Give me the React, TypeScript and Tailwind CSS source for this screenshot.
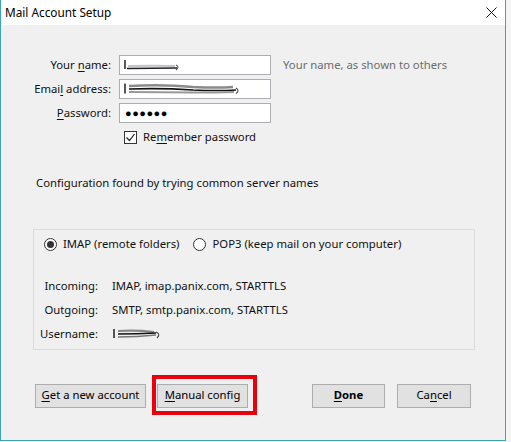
import React from "react";

const font = { fontFamily: '"Noto Sans", "Open Sans", sans-serif' };

function U({ children }: { children: React.ReactNode }) {
  return <span className="underline underline-offset-2">{children}</span>;
}

function Scribble({ w, kind }: { w: number; kind: number }) {
  if (kind === 0) {
    return (
      <svg width={w} height={14} viewBox={`0 0 ${w} 14`}>
        <path d="M2 2 V11" stroke="#111" strokeWidth="1.4" fill="none" />
        <path d="M4 10.5 Q28 10 54 10" stroke="#222" strokeWidth="1.6" fill="none" />
        <path d="M5 8 Q28 7.5 52 8" stroke="#c4c4c4" strokeWidth="2" fill="none" />
        <path d="M53 7 Q57 9 53 12" stroke="#555" strokeWidth="1.1" fill="none" />
      </svg>
    );
  }
  if (kind === 1) {
    return (
      <svg width={w} height={14} viewBox={`0 0 ${w} 14`}>
        <path d="M2 1.5 V11.5" stroke="#111" strokeWidth="1.4" fill="none" />
        <path d="M6 4 Q40 2 70 5 Q95 6 110 5" stroke="#8a8a8a" strokeWidth="2.6" fill="none" />
        <path d="M6 7 Q40 6 70 8 Q95 9 113 8" stroke="#111" strokeWidth="1.6" fill="none" />
        <path d="M6 10 Q40 10 70 10.5 Q95 10.5 111 10" stroke="#999" strokeWidth="2.2" fill="none" />
        <path d="M113 6 Q117 8.5 113 11.5" stroke="#444" strokeWidth="1.1" fill="none" />
      </svg>
    );
  }
  return (
    <svg width={w} height={12} viewBox={`0 0 ${w} 12`}>
      <path d="M2 1 V10" stroke="#111" strokeWidth="1.4" fill="none" />
      <path d="M6 3 Q25 2 42 4" stroke="#888" strokeWidth="2.2" fill="none" />
      <path d="M6 6 Q25 6 44 5" stroke="#111" strokeWidth="1.5" fill="none" />
      <path d="M6 9 Q25 9 44 7" stroke="#777" strokeWidth="1.7" fill="none" />
      <path d="M44 4 Q49 6 45 10" stroke="#444" strokeWidth="1.1" fill="none" />
    </svg>
  );
}

function Btn({ children, bold, w }: { children: React.ReactNode; bold?: boolean; w: string }) {
  return (
    <div
      className={`${w} h-[24px] shrink-0 border border-[#adadad] bg-[#e1e1e1] flex items-center justify-center text-black ${bold ? "font-bold" : ""}`}
    >
      {children}
    </div>
  );
}

export default function App() {
  return (
    <div className="w-[511px] h-[442px] bg-[#f4f4f4] text-[11.3px] text-[#111]" style={font}>
      <div className="w-[506px] h-[441px] border-l border-r border-b border-[#3aa6b3] flex flex-col bg-[#f0f0f0]">
        {/* Title bar */}
        <div className="h-[25px] bg-white flex items-center justify-between pl-[4px] pr-[8px] shrink-0">
          <span className="text-[11.8px] text-black">Mail Account Setup</span>
          <svg width="11" height="11" viewBox="0 0 11 11">
            <path d="M0.5 0.5 L10.5 10.5 M10.5 0.5 L0.5 10.5" stroke="#111" strokeWidth="1" />
          </svg>
        </div>

        {/* Body */}
        <div className="flex flex-col pt-[30px]">
          <div className="grid grid-cols-[110px_152px_auto] gap-x-[8px] gap-y-[4px] items-center">
            <div className="text-right">
              Your <U>n</U>ame:
            </div>
            <div className="h-[20px] bg-white border border-[#abadb3] flex items-center pl-[3px]">
              <Scribble w={60} kind={0} />
            </div>
            <div className="pl-[4px] text-[#6d6d6d]">Your name, as shown to others</div>

            <div className="text-right">
              Emai<U>l</U> address:
            </div>
            <div className="h-[20px] bg-white border border-[#abadb3] flex items-center pl-[3px]">
              <Scribble w={120} kind={1} />
            </div>
            <div />

            <div className="text-right">
              <U>P</U>assword:
            </div>
            <div className="h-[20px] bg-white border border-[#abadb3] flex items-center pl-[5px] text-[11px] tracking-[0.5px] text-black">
              ●●●●●●
            </div>
            <div />
          </div>

          <div className="flex items-center mt-[5px] ml-[123px] h-[18px]">
            <div className="w-[13px] h-[13px] border border-[#333] bg-white flex items-center justify-center">
              <svg width="11" height="11" viewBox="0 0 11 11">
                <path d="M1.5 5.5 L4.5 8.5 L9.5 2" stroke="#222" strokeWidth="1.2" fill="none" />
              </svg>
            </div>
            <span className="ml-[6px]">
              Re<U>m</U>ember password
            </span>
          </div>

          <div className="ml-[35px] mt-[29px]">Configuration found by trying common server names</div>

          <div className="ml-[32px] mt-[37px] w-[442px] h-[121px] border border-[#dcdcdc] flex flex-col">
            <div className="flex items-center mt-[6px] ml-[10px] h-[18px]">
              <div className="w-[13px] h-[13px] rounded-full border border-[#333] bg-white flex items-center justify-center">
                <div className="w-[7px] h-[7px] rounded-full bg-[#333]" />
              </div>
              <span className="ml-[6px]">IMAP (remote folders)</span>
              <div className="ml-[14px] w-[13px] h-[13px] rounded-full border border-[#333] bg-white" />
              <span className="ml-[6px]">POP3 (keep mail on your computer)</span>
            </div>

            <div className="grid grid-cols-[78px_auto] gap-y-[6px] mt-[23px] items-center">
              <div className="text-right pr-[14px] h-[18px] leading-[18px]">Incoming:</div>
              <div className="h-[18px] leading-[18px]">IMAP, imap.panix.com, STARTTLS</div>
              <div className="text-right pr-[14px] h-[18px] leading-[18px]">Outgoing:</div>
              <div className="h-[18px] leading-[18px]">SMTP, smtp.panix.com, STARTTLS</div>
              <div className="text-right pr-[14px] h-[18px] leading-[18px]">Username:</div>
              <div className="h-[18px] flex items-center">
                <Scribble w={52} kind={2} />
              </div>
            </div>
          </div>

          <div className="flex items-center mt-[34px] ml-[34px]">
            <Btn w="w-[111px]">
              <U>G</U>et a new account
            </Btn>
            <div className="ml-[11px] relative">
              <Btn w="w-[91px]">
                <U>M</U>anual config
              </Btn>
              <div className="absolute left-[-5px] top-[-9px] w-[105px] h-[40px] border-[4px] border-[#e8000d] pointer-events-none" />
            </div>
            <div className="ml-[64px]">
              <Btn bold w="w-[73px]">
                <U>D</U>one
              </Btn>
            </div>
            <div className="ml-[12px]">
              <Btn w="w-[74px]">
                Ca<U>n</U>cel
              </Btn>
            </div>
          </div>
        </div>
      </div>
    </div>
  );
}
